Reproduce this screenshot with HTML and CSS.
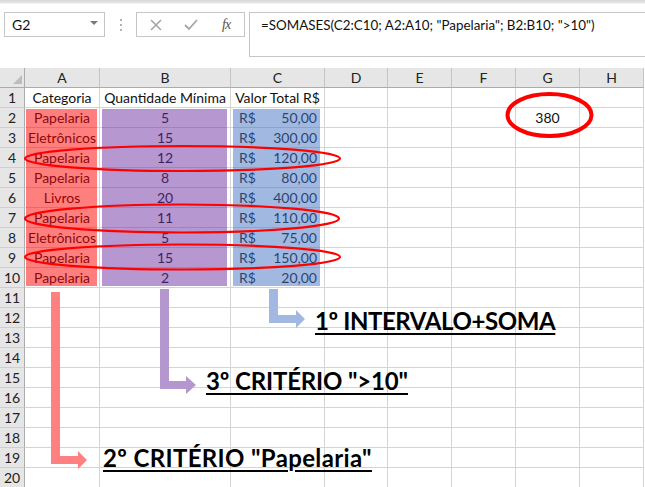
FILE: index.html
```html
<!DOCTYPE html>
<html lang="pt-BR">
<head>
<meta charset="UTF-8" />
<meta name="viewport" content="width=device-width, initial-scale=1" />
<title>SOMASES - exemplo</title>
<link rel="stylesheet" href="styles.css">
</head>
<body>

<!-- Barra de fórmulas -->
<div class="formula-bar">
  <div class="name-box">
    <span>G2</span>
    <svg class="caret" width="8" height="4" viewBox="0 0 8 4"><path d="M0 0H8L4 4Z" fill="#7a7a7a"/></svg>
  </div>
  <div class="grip"><i></i><i></i><i></i></div>
  <div class="fx-box">
    <svg width="12" height="12" viewBox="0 0 12 12"><path d="M1 1L11 11M11 1L1 11" stroke="#a6a6a6" stroke-width="1.6"/></svg>
    <svg width="14" height="12" viewBox="0 0 14 12"><path d="M1 6L5 10L13 1" stroke="#a6a6a6" stroke-width="1.8" fill="none"/></svg>
    <span class="fx">fx</span>
  </div>
  <div class="formula-input">=SOMASES(C2:C10; A2:A10; "Papelaria"; B2:B10; "&gt;10")</div>
</div>

<!-- Planilha -->
<div class="sheet">
  <div class="row head">
    <div class="corner"></div><div>A</div><div>B</div><div>C</div><div>D</div><div>E</div><div>F</div><div>G</div><div>H</div>
  </div>
  <div class="row">
    <div class="rh">1</div><div class="c">Categoria</div><div class="c">Quantidade Mínima</div><div class="c">Valor Total R$</div><div></div><div></div><div></div><div></div><div></div>
  </div>
  <div class="row">
    <div class="rh">2</div><div class="c">Papelaria</div><div class="c">5</div><div class="money"><span>R$</span><span>50,00</span></div><div></div><div></div><div></div><div class="c">380</div><div></div>
  </div>
  <div class="row">
    <div class="rh">3</div><div class="c">Eletrônicos</div><div class="c">15</div><div class="money"><span>R$</span><span>300,00</span></div><div></div><div></div><div></div><div></div><div></div>
  </div>
  <div class="row">
    <div class="rh">4</div><div class="c">Papelaria</div><div class="c">12</div><div class="money"><span>R$</span><span>120,00</span></div><div></div><div></div><div></div><div></div><div></div>
  </div>
  <div class="row">
    <div class="rh">5</div><div class="c">Papelaria</div><div class="c">8</div><div class="money"><span>R$</span><span>80,00</span></div><div></div><div></div><div></div><div></div><div></div>
  </div>
  <div class="row">
    <div class="rh">6</div><div class="c">Livros</div><div class="c">20</div><div class="money"><span>R$</span><span>400,00</span></div><div></div><div></div><div></div><div></div><div></div>
  </div>
  <div class="row">
    <div class="rh">7</div><div class="c">Papelaria</div><div class="c">11</div><div class="money"><span>R$</span><span>110,00</span></div><div></div><div></div><div></div><div></div><div></div>
  </div>
  <div class="row">
    <div class="rh">8</div><div class="c">Eletrônicos</div><div class="c">5</div><div class="money"><span>R$</span><span>75,00</span></div><div></div><div></div><div></div><div></div><div></div>
  </div>
  <div class="row">
    <div class="rh">9</div><div class="c">Papelaria</div><div class="c">15</div><div class="money"><span>R$</span><span>150,00</span></div><div></div><div></div><div></div><div></div><div></div>
  </div>
  <div class="row">
    <div class="rh">10</div><div class="c">Papelaria</div><div class="c">2</div><div class="money"><span>R$</span><span>20,00</span></div><div></div><div></div><div></div><div></div><div></div>
  </div>
  <div class="row"><div class="rh">11</div><div></div><div></div><div></div><div></div><div></div><div></div><div></div><div></div></div>
  <div class="row"><div class="rh">12</div><div></div><div></div><div></div><div></div><div></div><div></div><div></div><div></div></div>
  <div class="row"><div class="rh">13</div><div></div><div></div><div></div><div></div><div></div><div></div><div></div><div></div></div>
  <div class="row"><div class="rh">14</div><div></div><div></div><div></div><div></div><div></div><div></div><div></div><div></div></div>
  <div class="row"><div class="rh">15</div><div></div><div></div><div></div><div></div><div></div><div></div><div></div><div></div></div>
  <div class="row"><div class="rh">16</div><div></div><div></div><div></div><div></div><div></div><div></div><div></div><div></div></div>
  <div class="row"><div class="rh">17</div><div></div><div></div><div></div><div></div><div></div><div></div><div></div><div></div></div>
  <div class="row"><div class="rh">18</div><div></div><div></div><div></div><div></div><div></div><div></div><div></div><div></div></div>
  <div class="row"><div class="rh">19</div><div></div><div></div><div></div><div></div><div></div><div></div><div></div><div></div></div>
  <div class="row"><div class="rh">20</div><div></div><div></div><div></div><div></div><div></div><div></div><div></div><div></div></div>
</div>

<!-- Formas desenhadas sobre a planilha -->
<svg class="marks" width="645" height="487" viewBox="0 0 645 487">
  <rect x="26" y="109" width="71" height="177" fill="#ff0000" opacity="0.5"/>
  <rect x="102" y="109" width="125" height="177" fill="#7030a0" opacity="0.5"/>
  <rect x="233" y="109" width="87" height="177" fill="#4472c4" opacity="0.5"/>

  <ellipse cx="182.5" cy="158.5" rx="157.5" ry="12.5" fill="none" stroke="#ff0000" stroke-width="2.2"/>
  <ellipse cx="182" cy="218.5" rx="157" ry="14" fill="none" stroke="#ff0000" stroke-width="2.2"/>
  <ellipse cx="182.5" cy="257" rx="157.5" ry="12.5" fill="none" stroke="#ff0000" stroke-width="2.2"/>
  <ellipse cx="549.5" cy="115" rx="42" ry="21" fill="none" stroke="#ff0000" stroke-width="4"/>

  <path d="M51 292H60V456H78V451L87 460L78 469V464H51Z" fill="#ff8080"/>
  <path d="M160 289H169V381H186V376L196 385L186 394V389H160Z" fill="#b497cf"/>
  <path d="M269 289H278V315H296V310L305 319L296 328V323H269Z" fill="#a2b8e1"/>
</svg>

<div class="note note-soma">1º INTERVALO+SOMA</div>
<div class="note note-qtd">3º CRITÉRIO "&gt;10"</div>
<div class="note note-cat">2º CRITÉRIO "Papelaria"</div>

</body>
</html>
```

FILE: styles.css
```css
body {
  margin: 0;
  position: relative;
  width: 645px;
  height: 487px;
  overflow: hidden;
  background: #fff;
  font-family: Lato, "Liberation Sans", sans-serif;
  font-size: 14px;
  color: #111;
}

/* Barra de fórmulas */
.formula-bar {
  height: 68px;
  display: flex;
  align-items: flex-start;
  padding: 12px 0 0 4px;
  box-sizing: border-box;
  background: linear-gradient(to bottom, #d6d6d6 0, #e8e8e8 3px, #fff 4px);
}

.name-box {
  width: 101px;
  height: 25px;
  box-sizing: border-box;
  border: 1px solid #c6c6c6;
  background: #fff;
  display: flex;
  align-items: center;
  justify-content: space-between;
  padding: 0 6px 1px 7px;
}

.caret { margin-top: -3px; }

.grip {
  width: 31px;
  height: 25px;
  display: flex;
  flex-direction: column;
  align-items: center;
  justify-content: center;
  gap: 3px;
}

.grip i {
  display: block;
  width: 2px;
  height: 2px;
  background: #b3b3b3;
}

.fx-box {
  width: 109px;
  height: 25px;
  box-sizing: border-box;
  border: 1px solid #c6c6c6;
  background: #fff;
  display: flex;
  align-items: center;
  padding: 0 0 0 13px;
}

.fx-box svg:nth-child(2) { margin-left: 22px; }

.fx {
  margin-left: 24px;
  font-family: "Liberation Serif", serif;
  font-style: italic;
  font-size: 14px;
  color: #555;
  letter-spacing: -1px;
}

.formula-input {
  margin-left: 4px;
  flex: 1;
  height: 45px;
  box-sizing: border-box;
  border: 1px solid #c6c6c6;
  border-right: none;
  background: #fff;
  padding: 4px 0 0 11px;
  font-size: 13.4px;
  white-space: nowrap;
}

/* Grade da planilha */
.row {
  display: grid;
  grid-template-columns: 25px 75px 131px 94px 63px 64px 64px 64px 64px;
  height: 20px;
}

.row > div {
  box-sizing: border-box;
  border-right: 1px solid #d4d4d4;
  border-bottom: 1px solid #d4d4d4;
  line-height: 19px;
  white-space: nowrap;
  overflow: hidden;
}

.row.head > div {
  background: #e6e6e6;
  border-right-color: #c4c4c4;
  border-bottom-color: #ababab;
  text-align: center;
  color: #222;
}

.row.head .corner {
  position: relative;
  border-right-color: #ababab;
}

.corner::after {
  content: "";
  position: absolute;
  right: 2px;
  bottom: 3px;
  border-left: 9px solid transparent;
  border-bottom: 9px solid #bdbdbd;
}

.row > .rh {
  background: #e6e6e6;
  border-right-color: #ababab;
  border-bottom-color: #cfcfcf;
  text-align: center;
  color: #222;
}

.c { text-align: center; }

.money {
  display: flex;
  justify-content: space-between;
  padding: 0 7px 0 8px;
}

/* Formas e legendas */
.marks {
  position: absolute;
  left: 0;
  top: 0;
  pointer-events: none;
}

.note {
  position: absolute;
  font-weight: bold;
  font-size: 24px;
  line-height: 24px;
  color: #000;
  white-space: nowrap;
  text-decoration: underline;
  text-decoration-thickness: 2px;
  text-underline-offset: 3px;
}

.note-soma { left: 315px; top: 309px; letter-spacing: -0.4px; }
.note-qtd { left: 206px; top: 369px; letter-spacing: -0.15px; }
.note-cat { left: 103px; top: 446px; letter-spacing: 0.35px; }
```
